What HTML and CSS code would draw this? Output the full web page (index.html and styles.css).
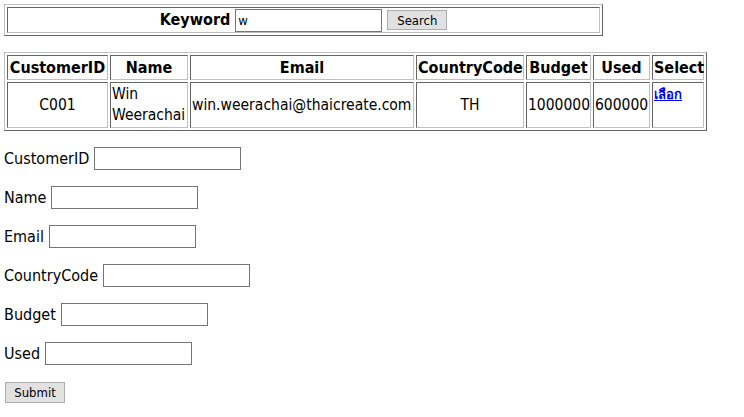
FILE: index.html
```html
<!DOCTYPE html>
<html>
<head>
<meta charset="utf-8">
<title>Customer</title>
<link rel="stylesheet" href="styles.css">
</head>
<body>
<form class="search-form">
  <table class="frame search-table">
    <tr>
      <th class="search-cell">Keyword <input class="kw" type="text" value="w"> <button class="btn" type="button">Search</button></th>
    </tr>
  </table>
</form>
<table class="frame grid">
  <tr>
    <th class="c1">CustomerID</th>
    <th class="c2">Name</th>
    <th class="c3">Email</th>
    <th class="c4">CountryCode</th>
    <th class="c5">Budget</th>
    <th class="c6">Used</th>
    <th class="c7">Select</th>
  </tr>
  <tr>
    <td class="center">C001</td>
    <td>Win Weerachai</td>
    <td>win.weerachai@thaicreate.com</td>
    <td class="center">TH</td>
    <td>1000000</td>
    <td>600000</td>
    <td class="top"><a class="pick" href="#">เลือก</a></td>
  </tr>
</table>
<form class="edit-form">
  <div class="field"><label>CustomerID</label> <input class="box" type="text"></div>
  <div class="field"><label>Name</label> <input class="box" type="text"></div>
  <div class="field"><label>Email</label> <input class="box" type="text"></div>
  <div class="field"><label>CountryCode</label> <input class="box" type="text"></div>
  <div class="field"><label>Budget</label> <input class="box" type="text"></div>
  <div class="field"><label>Used</label> <input class="box" type="text"></div>
  <div class="actions"><button class="btn submit" type="button">Submit</button></div>
</form>
</body>
</html>
```

FILE: styles.css
```css
html, body {
  background: #ffffff;
}
body {
  margin: 0;
  padding: 4px 0 0 4px;
  font-family: "DejaVu Sans Condensed", Tahoma, "Noto Sans", sans-serif;
  font-size: 16px;
  color: #000000;
}
form {
  margin: 0;
}
.frame {
  border-collapse: separate;
  border-spacing: 2px;
  border: 1px solid;
  border-color: #c0c0c0 #646464 #646464 #c0c0c0;
}
.frame th,
.frame td {
  border: 1px solid;
  border-color: #646464 #c0c0c0 #c0c0c0 #646464;
  box-sizing: border-box;
}
.search-table {
  width: 599px;
}
.search-cell {
  height: 26px;
  padding: 0 1px;
  text-align: center;
  font-weight: bold;
  white-space: nowrap;
}
.kw {
  box-sizing: border-box;
  width: 147px;
  height: 23px;
  margin: 0;
  padding: 1px 2px;
  border: 1px solid #767676;
  font-family: "DejaVu Sans Condensed", Tahoma, sans-serif;
  font-size: 13px;
  font-weight: normal;
  vertical-align: middle;
}
.btn {
  box-sizing: border-box;
  width: 60px;
  height: 20px;
  margin: 0;
  padding: 0;
  background: #e1e1e1;
  border: 1px solid #adadad;
  font-family: "DejaVu Sans Condensed", Tahoma, sans-serif;
  font-size: 13px;
  font-weight: normal;
  color: #000000;
  vertical-align: middle;
}
.grid {
  margin-top: 16px;
  table-layout: fixed;
  width: 703px;
}
.grid th {
  padding: 1px;
  line-height: 21px;
  font-weight: bold;
  text-align: center;
  white-space: nowrap;
}
.grid td {
  padding: 1px;
  font-size: 15.5px;
  line-height: 21px;
  vertical-align: middle;
  text-align: left;
}
.grid td.center {
  text-align: center;
}
.grid td.top {
  vertical-align: top;
}
.c1 { width: 101px; }
.c2 { width: 78px; }
.c3 { width: 224px; }
.c4 { width: 108px; }
.c5 { width: 65px; }
.c6 { width: 57px; }
.c7 { width: 52px; }
.pick {
  color: #0000ee;
  font-size: 13px;
  font-weight: bold;
  line-height: 16px;
  text-decoration: underline;
}
.edit-form {
  margin-top: 16px;
  display: flex;
  flex-direction: column;
  gap: 16px;
  align-items: flex-start;
}
.field {
  display: flex;
  align-items: center;
  gap: 5px;
  height: 23px;
}
.box {
  box-sizing: border-box;
  width: 147px;
  height: 23px;
  margin: 0;
  padding: 1px 2px;
  border: 1px solid #767676;
  font-family: "DejaVu Sans Condensed", Tahoma, sans-serif;
  font-size: 13px;
}
.actions {
  padding: 1px 0 0 1px;
}
.submit {
  height: 21px;
}
```
